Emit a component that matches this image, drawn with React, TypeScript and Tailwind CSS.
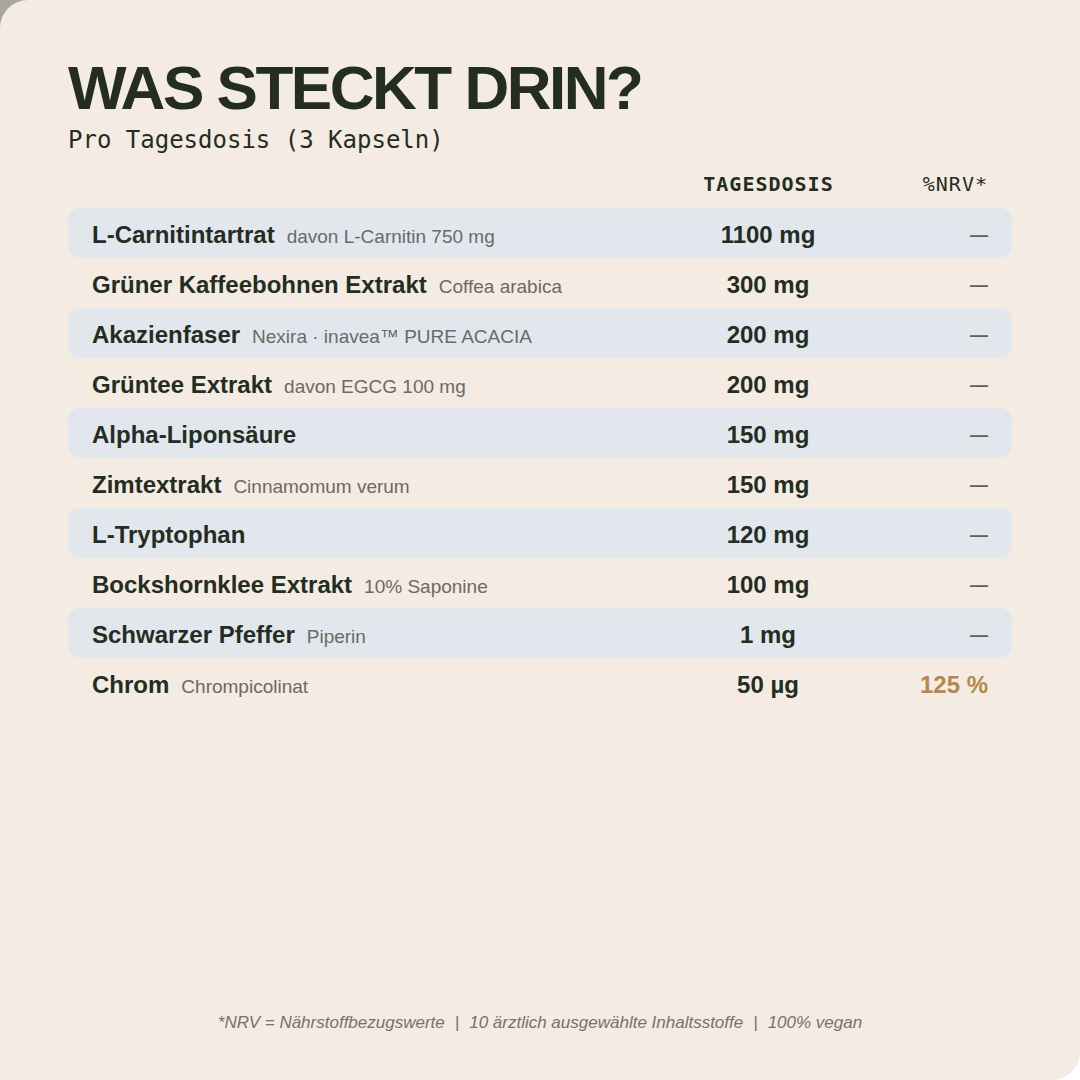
import React from "react";

type Row = { name: string; sub?: string; dose: string; nrv?: string };

const rows: Row[] = [
  { name: "L-Carnitintartrat", sub: "davon L-Carnitin 750 mg", dose: "1100 mg" },
  { name: "Grüner Kaffeebohnen Extrakt", sub: "Coffea arabica", dose: "300 mg" },
  { name: "Akazienfaser", sub: "Nexira · inavea™ PURE ACACIA", dose: "200 mg" },
  { name: "Grüntee Extrakt", sub: "davon EGCG 100 mg", dose: "200 mg" },
  { name: "Alpha-Liponsäure", dose: "150 mg" },
  { name: "Zimtextrakt", sub: "Cinnamomum verum", dose: "150 mg" },
  { name: "L-Tryptophan", dose: "120 mg" },
  { name: "Bockshornklee Extrakt", sub: "10% Saponine", dose: "100 mg" },
  { name: "Schwarzer Pfeffer", sub: "Piperin", dose: "1 mg" },
  { name: "Chrom", sub: "Chrompicolinat", dose: "50 µg", nrv: "125 %" },
];

const sans = { fontFamily: '"Liberation Sans", Arial, sans-serif' };
const mono = { fontFamily: '"DejaVu Sans Mono", "Liberation Mono", monospace' };

export default function App() {
  return (
    <div className="w-[1080px] h-[1080px] bg-gradient-to-br from-[#a9a59b] via-[#f4ebe2] to-[#ffffff]">
      <div
        className="w-[1080px] h-[1080px] rounded-[28px] bg-[#f4ebe2] text-[#232d22] flex flex-col px-[68px]"
        style={sans}
      >
        <h1 className="pt-[57px] text-[62px] leading-none font-bold tracking-[-0.04em] text-[#232d22]">
          WAS STECKT DRIN?
        </h1>
        <div className="mt-[9px] text-[24px] leading-none text-[#232d22]" style={mono}>
          Pro Tagesdosis (3 Kapseln)
        </div>

        <div className="mt-[22px] h-[34px] grid grid-cols-[1fr_200px_120px] px-[24px] text-[20px] leading-none" style={mono}>
          <div />
          <div className="text-center font-bold tracking-[1px] pl-[1px]">TAGESDOSIS</div>
          <div className="text-right tracking-[1px]">%NRV*</div>
        </div>

        <div className="flex flex-col">
          {rows.map((r, i) => (
            <div
              key={r.name}
              className={
                "h-[50px] grid grid-cols-[1fr_200px_120px] items-center px-[24px] pt-[4px] rounded-[12px] " +
                (i % 2 === 0 ? "bg-[#e1e7ec]" : "")
              }
            >
              <div className="flex items-baseline whitespace-nowrap">
                <span className="text-[24px] font-bold leading-none">{r.name}</span>
                {r.sub && (
                  <span className="ml-[12px] text-[19px] leading-none text-[#6b6a66]">{r.sub}</span>
                )}
              </div>
              <div className="text-center text-[24px] font-bold leading-none">{r.dose}</div>
              <div className="text-right leading-none">
                {r.nrv ? (
                  <span className="text-[24px] font-bold text-[#b5884a]">{r.nrv}</span>
                ) : (
                  <span className="text-[18px] font-bold text-[#5f5e5a]">—</span>
                )}
              </div>
            </div>
          ))}
        </div>

        <div className="mt-auto pb-[49px] text-center text-[17px] leading-none italic text-[#77726b]">
          *NRV = Nährstoffbezugswerte<span className="mx-[10px]">|</span>10 ärztlich ausgewählte Inhaltsstoffe
          <span className="mx-[10px]">|</span>100% vegan
        </div>
      </div>
    </div>
  );
}
